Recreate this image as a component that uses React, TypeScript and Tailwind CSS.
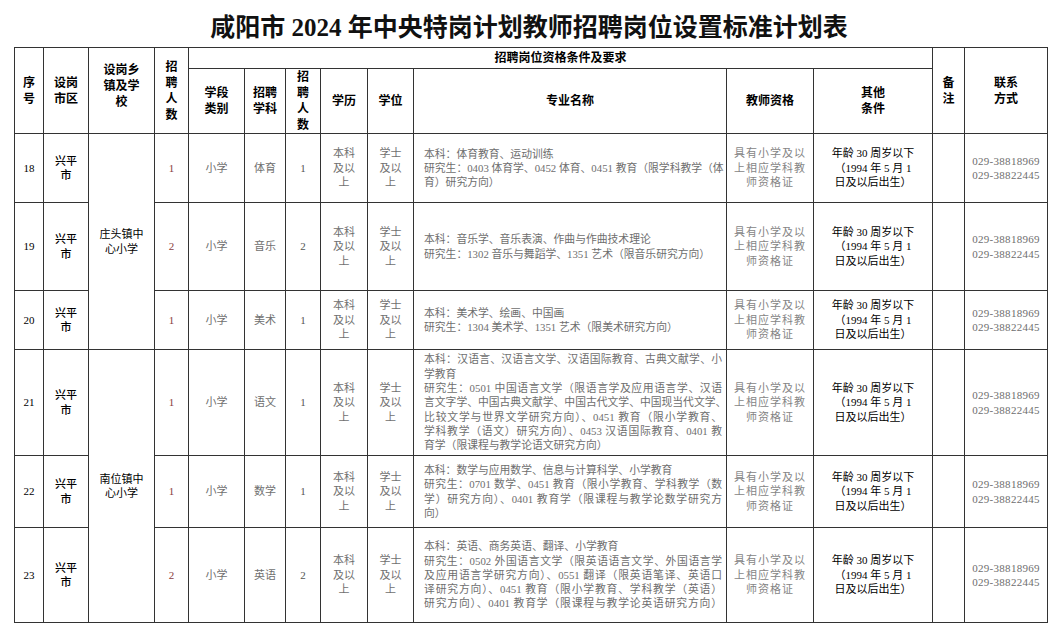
import React from 'react';

type Row = {
  no: string;
  school?: { name: string[]; span: number };
  count: string;
  subject: string;
  lines: { t: string; full?: boolean }[];
};

const rows: Row[] = [
  {
    no: '18',
    school: { name: ['庄头镇中', '心小学'], span: 3 },
    count: '1',
    subject: '体育',
    lines: [
      { t: '本科：体育教育、运动训练' },
      { t: '研究生：0403 体育学、0452 体育、0451 教育（限学科教学（体', full: true },
      { t: '育）研究方向）' },
    ],
  },
  {
    no: '19',
    count: '2',
    subject: '音乐',
    lines: [
      { t: '本科：音乐学、音乐表演、作曲与作曲技术理论' },
      { t: '研究生：1302 音乐与舞蹈学、1351 艺术（限音乐研究方向）' },
    ],
  },
  {
    no: '20',
    count: '1',
    subject: '美术',
    lines: [
      { t: '本科：美术学、绘画、中国画' },
      { t: '研究生：1304 美术学、1351 艺术（限美术研究方向）' },
    ],
  },
  {
    no: '21',
    school: { name: ['南位镇中', '心小学'], span: 3 },
    count: '1',
    subject: '语文',
    lines: [
      { t: '本科：汉语言、汉语言文学、汉语国际教育、古典文献学、小', full: true },
      { t: '学教育' },
      { t: '研究生：0501 中国语言文学（限语言学及应用语言学、汉语', full: true },
      { t: '言文字学、中国古典文献学、中国古代文学、中国现当代文学、', full: true },
      { t: '比较文学与世界文学研究方向）、0451 教育（限小学教育、', full: true },
      { t: '学科教学（语文）研究方向）、0453 汉语国际教育、0401 教', full: true },
      { t: '育学（限课程与教学论语文研究方向）' },
    ],
  },
  {
    no: '22',
    count: '1',
    subject: '数学',
    lines: [
      { t: '本科：数学与应用数学、信息与计算科学、小学教育' },
      { t: '研究生：0701 数学、0451 教育（限小学教育、学科教学（数', full: true },
      { t: '学）研究方向）、0401 教育学（限课程与教学论数学研究方', full: true },
      { t: '向）' },
    ],
  },
  {
    no: '23',
    count: '2',
    subject: '英语',
    lines: [
      { t: '本科：英语、商务英语、翻译、小学教育' },
      { t: '研究生：0502 外国语言文学（限英语语言文学、外国语言学', full: true },
      { t: '及应用语言学研究方向）、0551 翻译（限英语笔译、英语口', full: true },
      { t: '译研究方向）、0451 教育（限小学教育、学科教学（英语）', full: true },
      { t: '研究方向）、0401 教育学（限课程与教学论英语研究方向）', full: true },
    ],
  },
];

const heights = ['h-[69px]', 'h-[88px]', 'h-[59px]', 'h-[106px]', 'h-[72px]', 'h-[95px]'];

const cell = 'border border-[#333] text-center align-middle p-0';
const head = 'border border-[#333] text-center align-middle p-0 font-bold text-[12px] leading-[16px] text-black';

function Lines({ items }: { items: string[] }) {
  return (
    <>
      {items.map((s, i) => (
        <div key={i} className="whitespace-nowrap">
          {s}
        </div>
      ))}
    </>
  );
}

export default function App() {
  return (
    <div
      className="w-[1058px] h-[633px] bg-white"
      style={{ fontFamily: '"Liberation Serif", "Noto Sans CJK SC", serif' }}
    >
      <div className="h-[47px] flex items-center justify-center pt-[9px]">
        <h1 className="text-[25px] font-bold text-[#111] leading-[30px]">
          咸阳市 2024 年中央特岗计划教师招聘岗位设置标准计划表
        </h1>
      </div>

      <div className="px-[14px]">
        <table className="w-[1033px] table-fixed border-collapse">
          <colgroup>
            <col className="w-[29px]" />
            <col className="w-[45px]" />
            <col className="w-[66px]" />
            <col className="w-[34px]" />
            <col className="w-[56px]" />
            <col className="w-[41px]" />
            <col className="w-[35px]" />
            <col className="w-[47px]" />
            <col className="w-[46px]" />
            <col className="w-[313px]" />
            <col className="w-[87px]" />
            <col className="w-[119px]" />
            <col className="w-[32px]" />
            <col className="w-[83px]" />
          </colgroup>
          <thead>
            <tr className="h-[21px]">
              <th rowSpan={2} className={head}>
                <Lines items={['序', '号']} />
              </th>
              <th rowSpan={2} className={head}>
                <Lines items={['设岗', '市区']} />
              </th>
              <th rowSpan={2} className={head}>
                <div className="-mt-[10px]">
                  <Lines items={['设岗乡', '镇及学', '校']} />
                </div>
              </th>
              <th rowSpan={2} className={head}>
                <Lines items={['招', '聘', '人', '数']} />
              </th>
              <th colSpan={8} className={head}>
                招聘岗位资格条件及要求
              </th>
              <th rowSpan={2} className={head}>
                <Lines items={['备', '注']} />
              </th>
              <th rowSpan={2} className={head}>
                <Lines items={['联系', '方式']} />
              </th>
            </tr>
            <tr className="h-[65px]">
              <th className={head}>
                <Lines items={['学段', '类别']} />
              </th>
              <th className={head}>
                <Lines items={['招聘', '学科']} />
              </th>
              <th className={head}>
                <Lines items={['招', '聘', '人', '数']} />
              </th>
              <th className={head}>学历</th>
              <th className={head}>学位</th>
              <th className={head}>专业名称</th>
              <th className={head}>教师资格</th>
              <th className={head}>
                <Lines items={['其他', '条件']} />
              </th>
            </tr>
          </thead>
          <tbody className="text-[11px] leading-[14.5px]">
            {rows.map((r, idx) => (
              <tr key={r.no} className={heights[idx]}>
                <td className={`${cell} text-black`}>{r.no}</td>
                <td className={`${cell} text-black font-medium`}>
                  <Lines items={['兴平', '市']} />
                </td>
                {r.school && (
                  <td rowSpan={r.school.span} className={`${cell} text-black`}>
                    <Lines items={r.school.name} />
                  </td>
                )}
                <td className={`${cell} text-[#8a4040]`}>{r.count}</td>
                <td className={`${cell} text-[#707070]`}>小学</td>
                <td className={`${cell} text-[#707070]`}>{r.subject}</td>
                <td className={`${cell} text-[#555]`}>{r.count}</td>
                <td className={`${cell} text-[#707070]`}>
                  <Lines items={['本科', '及以', '上']} />
                </td>
                <td className={`${cell} text-[#707070]`}>
                  <Lines items={['学士', '及以', '上']} />
                </td>
                <td className={`${cell} text-left text-[#6e6e6e] text-[10.8px] leading-[14.3px]`}>
                  <div className="pl-[10px] pr-[4px]">
                    {r.lines.map((l, i) => (
                      <div
                        key={i}
                        className={l.full ? 'whitespace-nowrap text-justify [text-align-last:justify]' : 'whitespace-nowrap'}
                      >
                        {l.t}
                      </div>
                    ))}
                  </div>
                </td>
                <td className={`${cell} text-[#858585] tracking-[1px]`}>
                  <Lines items={['具有小学及以', '上相应学科教', '师资格证']} />
                </td>
                <td className={`${cell} text-black`}>
                  <Lines items={['年龄 30 周岁以下', '（1994 年 5 月 1', '日及以后出生）']} />
                </td>
                <td className={cell}></td>
                <td className={`${cell} text-[#6e6e6e] tracking-[0.3px]`}>
                  <Lines items={['029-38818969', '029-38822445']} />
                </td>
              </tr>
            ))}
          </tbody>
        </table>
      </div>
    </div>
  );
}
